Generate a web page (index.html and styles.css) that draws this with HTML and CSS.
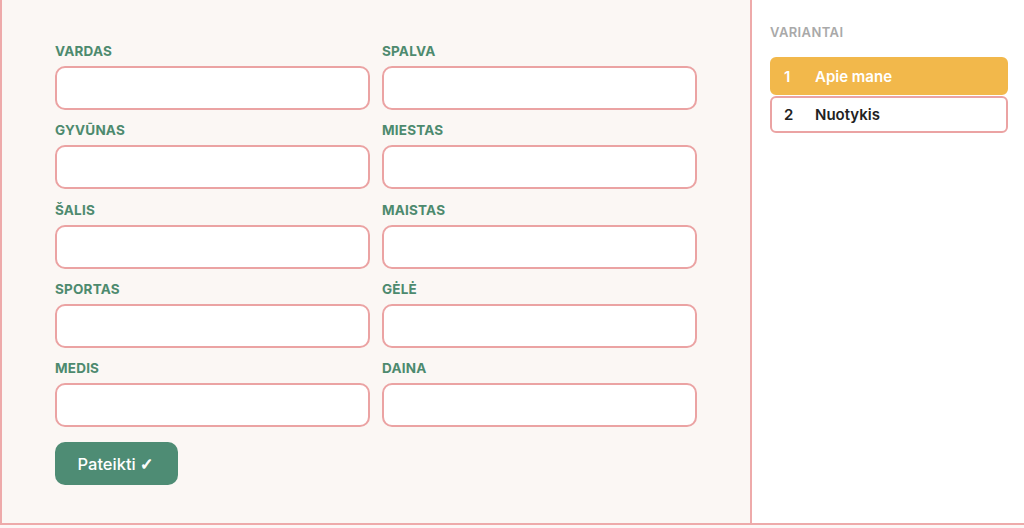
FILE: index.html
```html
<!DOCTYPE html>
<html lang="lt">
<head>
  <meta charset="UTF-8">
  <title>Istorija</title>
  <meta name="viewport" content="width=device-width, initial-scale=1">
  <link rel="stylesheet" href="styles.css">
</head>
<body>

  <div class="page">
    <main class="main">
      <form class="fields">
        <div class="field">
          <label>VARDAS</label>
          <input type="text" name="vardas">
        </div>
        <div class="field">
          <label>SPALVA</label>
          <input type="text" name="spalva">
        </div>
        <div class="field">
          <label>GYVŪNAS</label>
          <input type="text" name="gyvunas">
        </div>
        <div class="field">
          <label>MIESTAS</label>
          <input type="text" name="miestas">
        </div>
        <div class="field">
          <label>ŠALIS</label>
          <input type="text" name="salis">
        </div>
        <div class="field">
          <label>MAISTAS</label>
          <input type="text" name="maistas">
        </div>
        <div class="field">
          <label>SPORTAS</label>
          <input type="text" name="sportas">
        </div>
        <div class="field">
          <label>GĖLĖ</label>
          <input type="text" name="gele">
        </div>
        <div class="field">
          <label>MEDIS</label>
          <input type="text" name="medis">
        </div>
        <div class="field">
          <label>DAINA</label>
          <input type="text" name="daina">
        </div>
      </form>
      <button class="submit" type="button">Pateikti <span class="check">✓</span></button>
    </main>

    <aside class="sidebar">
      <h4>VARIANTAI</h4>
      <ul class="variants">
        <li class="active"><span class="num">1</span>Apie mane</li>
        <li><span class="num">2</span>Nuotykis</li>
      </ul>
    </aside>
  </div>

</body>
</html>
```

FILE: styles.css
```css
* {
  box-sizing: border-box;
}
body {
  font-family: 'Inter', 'Noto Sans', sans-serif;
  background-color: #fdf6f5;
  margin: 0;
  padding: 0;
}
.page {
  display: flex;
  height: 525px;
  border-left: 2px solid #eeaaaa;
  border-bottom: 2px solid #eeaaaa;
  background: white;
}
.main {
  width: 750px;
  background-color: #fbf7f4;
  border-right: 2px solid #eeaaaa;
  padding: 43px 52px 0 53px;
}
.fields {
  display: grid;
  grid-template-columns: 315px 315px;
  column-gap: 12px;
  row-gap: 12.25px;
}
.field label {
  display: block;
  font-size: 13.5px;
  line-height: 16px;
  font-weight: 700;
  color: #4d8a6e;
  letter-spacing: 0.2px;
  margin-bottom: 7px;
}
.field input {
  display: block;
  width: 100%;
  height: 44px;
  border: 2px solid #eba3a3;
  border-radius: 10px;
  background: white;
  outline: none;
}
.submit {
  margin-top: 15px;
  width: 123px;
  height: 43px;
  padding-right: 8px;
  background-color: #4e8c74;
  color: white;
  border: none;
  border-radius: 10px;
  font-family: inherit;
  font-size: 16.5px;
  font-weight: 500;
  cursor: pointer;
}
.check {
  font-family: 'DejaVu Sans', sans-serif;
  font-weight: 700;
  font-size: 16px;
  -webkit-text-stroke: 0.8px white;
}
.sidebar {
  flex: 1;
  padding: 24px 16px 0 18px;
}
.sidebar h4 {
  margin: 0 0 17px;
  font-size: 13px;
  line-height: 16px;
  font-weight: 600;
  color: #a9a9a9;
  letter-spacing: 0.4px;
}
.variants {
  list-style: none;
  margin: 0;
  padding: 0;
}
.variants li {
  display: flex;
  align-items: center;
  height: 37px;
  padding-left: 12px;
  margin-bottom: 1px;
  border: 2px solid #eba3a3;
  border-radius: 6px;
  background: white;
  color: #222;
  font-size: 15px;
  font-weight: 600;
}
.variants li.active {
  height: 38px;
  background-color: #f2b84b;
  border-color: #f2b84b;
  color: white;
}
.num {
  width: 31px;
}
```
